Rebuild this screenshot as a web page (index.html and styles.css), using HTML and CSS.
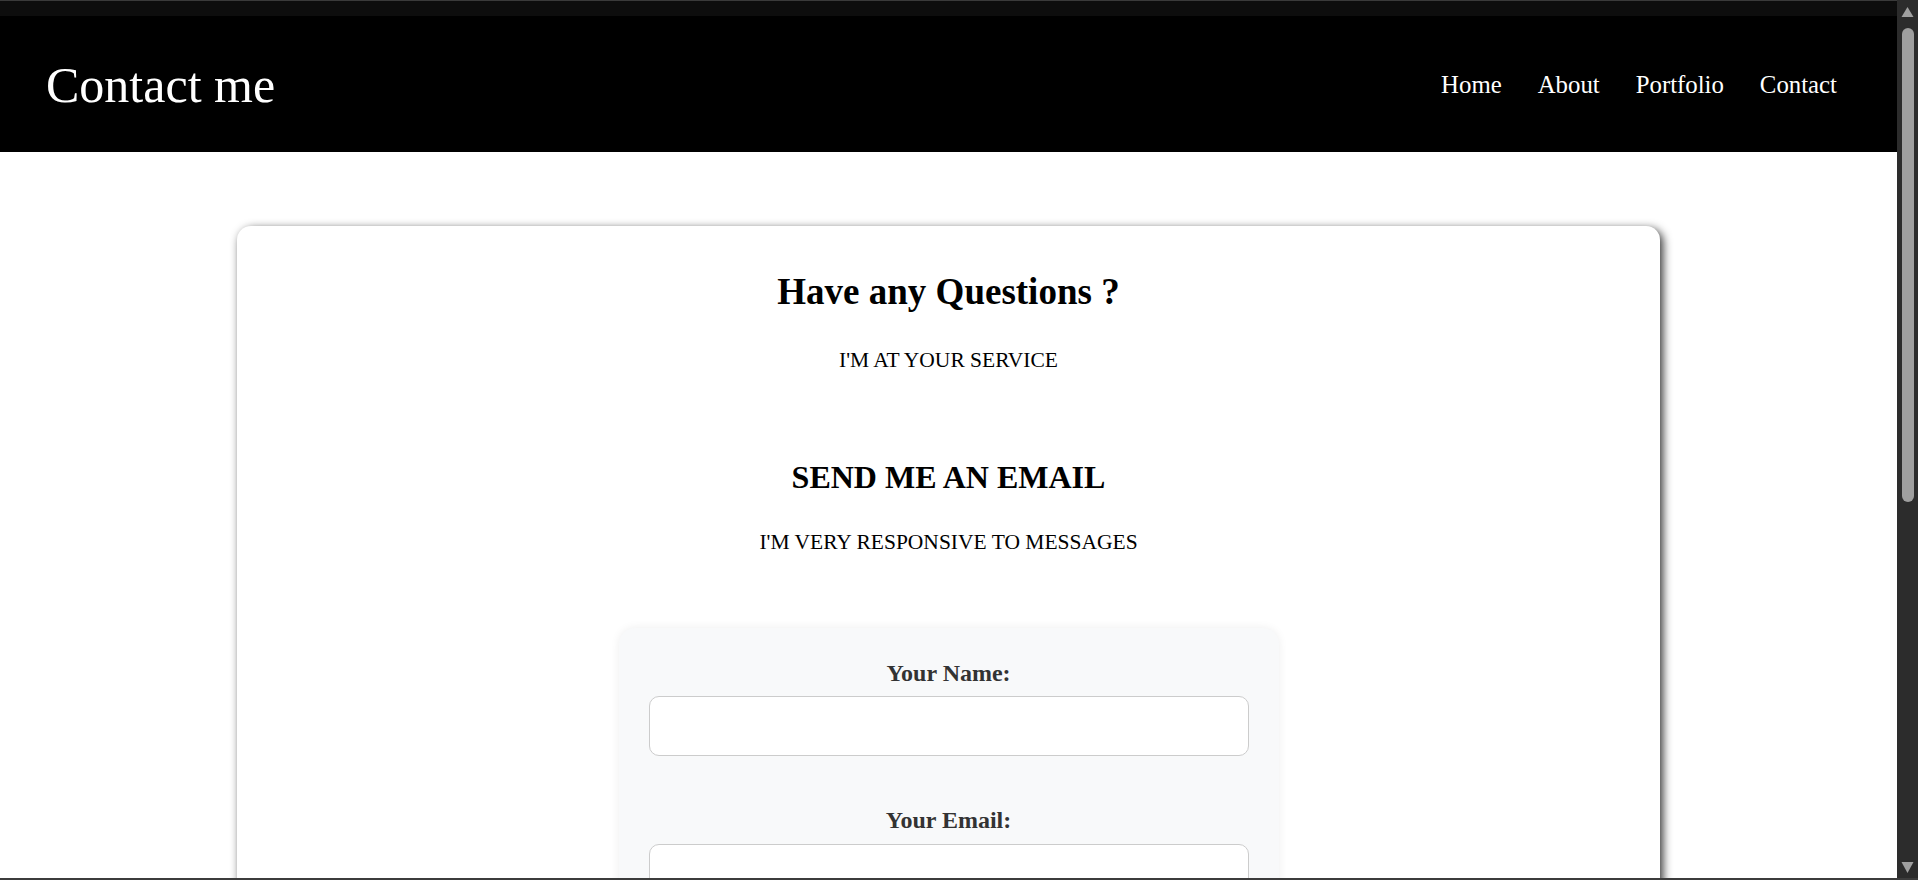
FILE: index.html
```html
<!DOCTYPE html>
<html lang="en">
<head>
<meta charset="utf-8">
<title>Contact me</title>
<link rel="stylesheet" href="styles.css">
</head>
<body>
<div class="screen">
  <div class="viewport">
    <div class="topbar"></div>
    <header class="site-header">
      <h1 class="site-title">Contact me</h1>
      <nav class="site-nav">
        <a href="#">Home</a>
        <a href="#">About</a>
        <a href="#">Portfolio</a>
        <a href="#">Contact</a>
      </nav>
    </header>
    <main class="page">
      <section class="card">
        <h2 class="intro-title">Have any Questions ?</h2>
        <p class="intro-sub">I'M AT YOUR SERVICE</p>
        <h2 class="email-title">SEND ME AN EMAIL</h2>
        <p class="intro-sub">I'M VERY RESPONSIVE TO MESSAGES</p>
        <form class="contact-form">
          <div class="field">
            <label for="name">Your Name:</label>
            <input id="name" type="text">
          </div>
          <div class="field">
            <label for="email">Your Email:</label>
            <input id="email" type="email">
          </div>
        </form>
      </section>
    </main>
  </div>
  <aside class="scrollbar">
    <svg class="sb-arrow" width="21" height="24" viewBox="0 0 21 24"><polygon points="4.5,17 16.5,17 10.5,7" fill="#a0a0a0"/></svg>
    <div class="sb-thumb"></div>
    <div class="sb-space"></div>
    <svg class="sb-arrow" width="21" height="16" viewBox="0 0 21 16"><polygon points="4.5,0 16.5,0 10.5,11" fill="#a0a0a0"/></svg>
  </aside>
</div>
<div class="frame-bottom"></div>
</body>
</html>
```
FILE: styles.css
```css
html, body {
  margin: 0;
  padding: 0;
}

body {
  height: 880px;
  overflow: hidden;
  display: flex;
  flex-direction: column;
  background: #fff;
  font-family: "Liberation Serif", "Times New Roman", serif;
  color: #000;
}

.screen {
  flex: 1;
  min-height: 0;
  display: flex;
}

.viewport {
  flex: 1;
  min-width: 0;
  overflow: hidden;
}

.topbar {
  height: 15px;
  border-top: 1px solid #3a3a3a;
  background: #0d0d0d;
}

.site-header {
  height: 136px;
  box-sizing: border-box;
  padding: 3px 60px 0 46px;
  background: #000;
  display: flex;
  align-items: center;
  justify-content: space-between;
}

.site-title {
  margin: 0;
  font-size: 50px;
  font-weight: normal;
  line-height: 1.15;
  color: #fff;
}

.site-nav {
  display: flex;
  gap: 36px;
}

.site-nav a {
  color: #fff;
  text-decoration: none;
  font-size: 24.8px;
  line-height: 1.15;
}

.page {
  padding: 74px 0 80px;
}

.card {
  width: 75%;
  margin: 0 auto;
  box-sizing: border-box;
  padding: 45px 0 60px;
  background: #fff;
  border-radius: 14px;
  box-shadow: 3px 3px 10px rgba(0, 0, 0, 0.8);
  text-align: center;
}

.intro-title {
  margin: 0;
  font-size: 37px;
  font-weight: bold;
  line-height: 1.15;
}

.email-title {
  margin: 87px 0 0;
  font-size: 32px;
  font-weight: bold;
  line-height: 1.15;
}

.intro-sub {
  margin: 34px 0 0;
  font-size: 21.5px;
  line-height: 1.15;
}

.contact-form {
  width: 660px;
  box-sizing: border-box;
  margin: 73px auto 0;
  padding: 32px 30px 40px;
  background: #f8f9fa;
  border-radius: 16px;
  box-shadow: 0 0 10px rgba(0, 0, 0, 0.07);
}

.field {
  margin-bottom: 51px;
}

.field label {
  display: block;
  margin-bottom: 9px;
  font-size: 24px;
  font-weight: bold;
  line-height: 1.15;
  color: #333;
}

.field input {
  display: block;
  width: 100%;
  box-sizing: border-box;
  height: 60px;
  padding: 0 12px;
  border: 1px solid #ccc;
  border-radius: 10px;
  background: #fff;
  font: inherit;
}

.scrollbar {
  width: 21px;
  flex: none;
  background: #2c2c2c;
  display: flex;
  flex-direction: column;
  align-items: center;
}

.sb-arrow {
  display: block;
  flex: none;
}

.sb-thumb {
  flex: none;
  width: 12px;
  height: 474px;
  margin-top: 4px;
  border-radius: 6px;
  background: #9f9f9f;
}

.sb-space {
  flex: 1;
}

.frame-bottom {
  height: 2px;
  flex: none;
  background: #3c3c3c;
}
```
